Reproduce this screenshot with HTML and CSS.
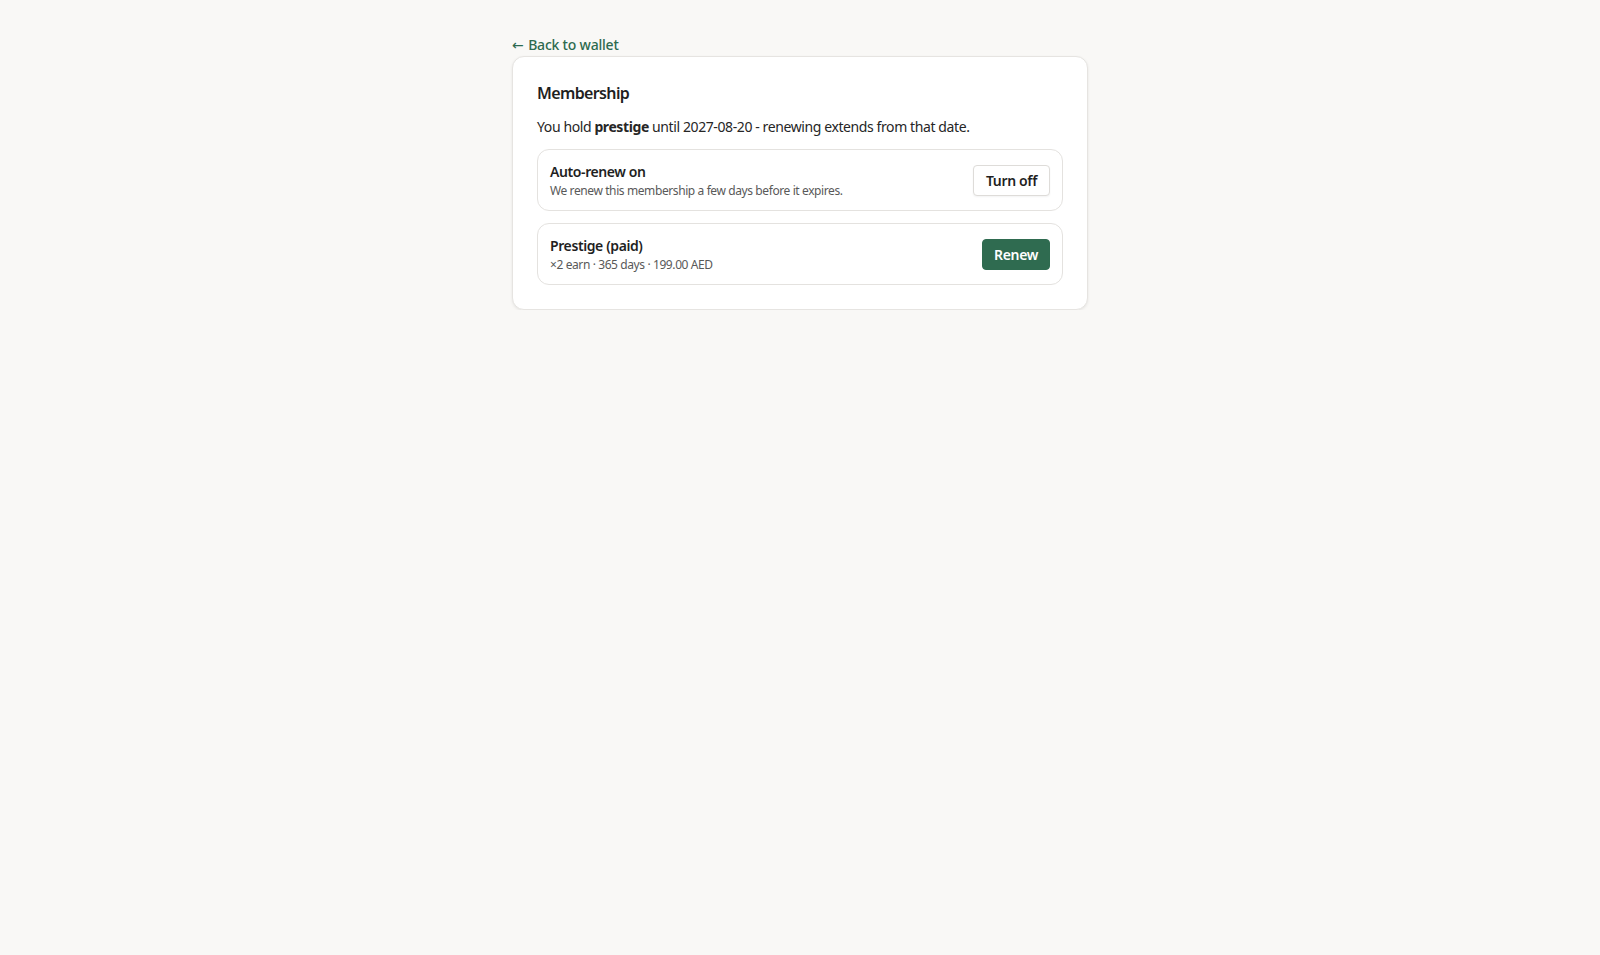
FILE: index.html
```html
<!DOCTYPE html>
<html lang="en">
<head>
<meta charset="utf-8">
<title>Membership</title>
<link rel="stylesheet" href="styles.css">
</head>
<body>
<main class="page">
  <a class="back" href="#"><span class="arrow">←</span> Back to wallet</a>
  <section class="card">
    <h1 class="title">Membership</h1>
    <p class="lead">You hold <strong>prestige</strong> until 2027-08-20 - renewing extends from that date.</p>
    <div class="row">
      <div class="row-text">
        <div class="row-title">Auto-renew on</div>
        <div class="row-sub">We renew this membership a few days before it expires.</div>
      </div>
      <button class="btn btn-outline" type="button">Turn off</button>
    </div>
    <div class="row">
      <div class="row-text">
        <div class="row-title">Prestige (paid)</div>
        <div class="row-sub">×2 earn · 365 days · 199.00 AED</div>
      </div>
      <button class="btn btn-primary" type="button">Renew</button>
    </div>
  </section>
</main>
</body>
</html>
```
FILE: styles.css
```css
* { box-sizing: border-box; }
html, body { margin: 0; padding: 0; }
body {
  background: #f9f8f6;
  font-family: "Noto Sans", "Open Sans", sans-serif;
  color: #1f1f1f;
  letter-spacing: -0.025em;
}
.page {
  width: 576px;
  margin: 0 auto;
  padding-top: 35px;
}
.back {
  display: block;
  width: max-content;
  font-size: 14px;
  line-height: 20px;
  font-weight: 500;
  color: #2d6a4f;
  text-decoration: none;
  margin-bottom: 1px;
  letter-spacing: -0.015em;
}
.arrow {
  font-family: "DejaVu Sans", sans-serif;
  letter-spacing: 0;
  margin-right: 1px;
}
.card {
  background: #ffffff;
  border: 1px solid #e6e4e1;
  border-radius: 12px;
  box-shadow: 0 1px 3px rgba(0,0,0,0.08);
  padding: 24px 24px 24px;
  display: flex;
  flex-direction: column;
  gap: 12px;
}
.title {
  margin: 0;
  font-size: 16px;
  line-height: 24px;
  font-weight: 600;
  color: #1f1f1f;
  letter-spacing: -0.04em;
}
.lead {
  margin: 0;
  font-size: 14px;
  line-height: 20px;
  color: #262626;
}
.lead strong { font-weight: 700; }
.row {
  display: flex;
  align-items: center;
  justify-content: space-between;
  border: 1px solid #e4e2df;
  border-radius: 12px;
  padding: 12px 12px 11px;
  min-height: 62px;
}
.row-text { display: flex; flex-direction: column; }
.row-title {
  font-size: 14px;
  line-height: 20px;
  font-weight: 600;
  color: #1f1f1f;
}
.row-sub {
  font-size: 12px;
  line-height: 17px;
  color: #595959;
}
.btn {
  font-family: inherit;
  letter-spacing: -0.025em;
  font-size: 14px;
  font-weight: 600;
  height: 31px;
  padding: 0 11px;
  border-radius: 4px;
  cursor: pointer;
}
.btn-outline {
  background: #ffffff;
  color: #1f1f1f;
  border: 1px solid #dedcd9;
  box-shadow: 0 1px 2px rgba(0,0,0,0.05);
  padding: 0 12px;
}
.btn-primary {
  background: #2f6b50;
  color: #ffffff;
  border: 1px solid #2f6b50;
}
```
